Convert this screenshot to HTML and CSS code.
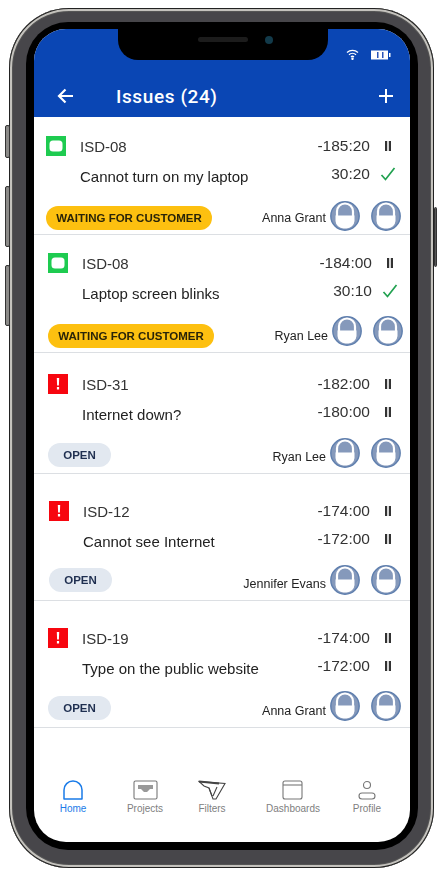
FILE: index.html
```html
<!DOCTYPE html>
<html lang="en">

<head>
    <meta charset="UTF-8">
    <meta name="viewport" content="width=device-width, initial-scale=1.0">
    <title>Issues</title>
    <link rel="stylesheet" href="styles.css">
</head>

<body>
    <svg class="sprites" width="0" height="0">
        <symbol id="avatar" viewBox="0 0 30 30">
            <circle cx="15" cy="15" r="14.2" fill="#8599bb" stroke="#5f7fae" stroke-width="1.400"/>
            <path d="M7 15v-4.500a8 8 0 0 1 16 0V15" fill="none" stroke="#fff" stroke-width="2.200"/>
            <path d="M5.500 14.500h19v5.500a8 8 0 0 1-8 7.500h-3a8 8 0 0 1-8-7.500z" fill="#fff"/>
        </symbol>
        <symbol id="pause" viewBox="0 0 8 12">
            <path d="M1 1h2.200v10H1zM4.800 1H7v10H4.800z" fill="#333"/>
        </symbol>
        <symbol id="check" viewBox="0 0 16 14">
            <path d="M1.500 8l4 4.500L14.500 1" fill="none" stroke="#21a150" stroke-width="1.700"/>
        </symbol>
        <symbol id="done" viewBox="0 0 20 20">
            <rect width="20" height="20" fill="#1ecb50"/>
            <rect x="3.500" y="4.500" width="13" height="11" rx="3.500" fill="#fff"/>
        </symbol>
        <symbol id="alert" viewBox="0 0 20 20">
            <rect width="20" height="20" fill="#f7060f"/>
            <path d="M8.800 4h2.400l-.3 7.500H9.100zM8.900 13h2.200v2.500H8.900z" fill="#fff"/>
        </symbol>
    </svg>

    <div class="phone">
        <span class="side-btn btn-mute"></span>
        <span class="side-btn btn-up"></span>
        <span class="side-btn btn-down"></span>
        <span class="side-btn btn-power"></span>

        <div class="screen">
            <div class="notch">
                <span class="speaker"></span>
                <span class="camera"></span>
            </div>

            <!-- Header -->
            <header class="app-header">
                <div class="status-icons">
                    <svg width="13" height="11" viewBox="0 0 13 11" fill="none" stroke="#fff" stroke-width="1.300">
                        <path d="M1 3.500a8 8 0 0 1 11 0M3 5.800a5 5 0 0 1 7 0M5 8a2.200 2.200 0 0 1 3 0"/>
                        <circle cx="6.500" cy="9.800" r=".6" fill="#fff"/>
                    </svg>
                    <svg width="20" height="10" viewBox="0 0 20 10">
                        <rect x="0" y="0.500" width="17" height="9" fill="#fff"/>
                        <path d="M6 2h1.500v6H6zM11 2h1.500v6H11z" fill="#2a55b8"/>
                        <rect x="18" y="3" width="1.500" height="4" fill="#fff"/>
                    </svg>
                </div>
                <div class="nav-row">
                    <svg class="nav-icon" width="16" height="16" viewBox="0 0 16 16" fill="none" stroke="#fff" stroke-width="2.200">
                        <path d="M16 8H2M8.500 1.500L2 8l6.500 6.500"/>
                    </svg>
                    <h1 class="nav-title">Issues (24)</h1>
                    <svg class="nav-icon" width="14" height="14" viewBox="0 0 14 14" fill="none" stroke="#fff" stroke-width="2">
                        <path d="M7 0v14M0 7h14"/>
                    </svg>
                </div>
            </header>

            <!-- Issue list -->
            <ul class="issues">
                <li class="issue issue-1">
                    <div class="issue-line">
                        <svg class="type-icon"><use href="#done"/></svg>
                        <span class="issue-id">ISD-08</span>
                        <span class="issue-time">-185:20</span>
                        <span class="issue-state"><svg class="pause"><use href="#pause"/></svg></span>
                    </div>
                    <div class="issue-line issue-second">
                        <span class="issue-title">Cannot turn on my laptop</span>
                        <span class="issue-time">30:20</span>
                        <span class="issue-state"><svg class="check"><use href="#check"/></svg></span>
                    </div>
                    <div class="issue-foot">
                        <span class="pill pill-waiting">WAITING FOR CUSTOMER</span>
                        <span class="assignee">Anna Grant</span>
                        <svg class="avatar"><use href="#avatar"/></svg>
                        <svg class="avatar"><use href="#avatar"/></svg>
                    </div>
                </li>
                <li class="issue issue-2">
                    <div class="issue-line">
                        <svg class="type-icon"><use href="#done"/></svg>
                        <span class="issue-id">ISD-08</span>
                        <span class="issue-time">-184:00</span>
                        <span class="issue-state"><svg class="pause"><use href="#pause"/></svg></span>
                    </div>
                    <div class="issue-line issue-second">
                        <span class="issue-title">Laptop screen blinks</span>
                        <span class="issue-time">30:10</span>
                        <span class="issue-state"><svg class="check"><use href="#check"/></svg></span>
                    </div>
                    <div class="issue-foot">
                        <span class="pill pill-waiting">WAITING FOR CUSTOMER</span>
                        <span class="assignee">Ryan Lee</span>
                        <svg class="avatar"><use href="#avatar"/></svg>
                        <svg class="avatar"><use href="#avatar"/></svg>
                    </div>
                </li>
                <li class="issue issue-3">
                    <div class="issue-line">
                        <svg class="type-icon"><use href="#alert"/></svg>
                        <span class="issue-id">ISD-31</span>
                        <span class="issue-time">-182:00</span>
                        <span class="issue-state"><svg class="pause"><use href="#pause"/></svg></span>
                    </div>
                    <div class="issue-line issue-second">
                        <span class="issue-title">Internet down?</span>
                        <span class="issue-time">-180:00</span>
                        <span class="issue-state"><svg class="pause"><use href="#pause"/></svg></span>
                    </div>
                    <div class="issue-foot">
                        <span class="pill pill-open">OPEN</span>
                        <span class="assignee">Ryan Lee</span>
                        <svg class="avatar"><use href="#avatar"/></svg>
                        <svg class="avatar"><use href="#avatar"/></svg>
                    </div>
                </li>
                <li class="issue issue-4">
                    <div class="issue-line">
                        <svg class="type-icon"><use href="#alert"/></svg>
                        <span class="issue-id">ISD-12</span>
                        <span class="issue-time">-174:00</span>
                        <span class="issue-state"><svg class="pause"><use href="#pause"/></svg></span>
                    </div>
                    <div class="issue-line issue-second">
                        <span class="issue-title">Cannot see Internet</span>
                        <span class="issue-time">-172:00</span>
                        <span class="issue-state"><svg class="pause"><use href="#pause"/></svg></span>
                    </div>
                    <div class="issue-foot">
                        <span class="pill pill-open">OPEN</span>
                        <span class="assignee">Jennifer Evans</span>
                        <svg class="avatar"><use href="#avatar"/></svg>
                        <svg class="avatar"><use href="#avatar"/></svg>
                    </div>
                </li>
                <li class="issue issue-5">
                    <div class="issue-line">
                        <svg class="type-icon"><use href="#alert"/></svg>
                        <span class="issue-id">ISD-19</span>
                        <span class="issue-time">-174:00</span>
                        <span class="issue-state"><svg class="pause"><use href="#pause"/></svg></span>
                    </div>
                    <div class="issue-line issue-second">
                        <span class="issue-title">Type on the public website</span>
                        <span class="issue-time">-172:00</span>
                        <span class="issue-state"><svg class="pause"><use href="#pause"/></svg></span>
                    </div>
                    <div class="issue-foot">
                        <span class="pill pill-open">OPEN</span>
                        <span class="assignee">Anna Grant</span>
                        <svg class="avatar"><use href="#avatar"/></svg>
                        <svg class="avatar"><use href="#avatar"/></svg>
                    </div>
                </li>
            </ul>

            <!-- Bottom tabs -->
            <nav class="tabs">
                <a href="#" class="tab tab-active">
                    <svg width="20" height="20" viewBox="0 0 20 20" fill="none" stroke="#1a7be8" stroke-width="1.500">
                        <path d="M1 19h18v-9a9 9 0 0 0-18 0z" stroke-linejoin="round"/>
                    </svg>
                    Home
                </a>
                <a href="#" class="tab">
                    <svg width="25" height="20" viewBox="0 0 25 20" fill="none" stroke="#777" stroke-width="1.100">
                        <rect x="1" y="1" width="23" height="18" rx="1.500"/>
                        <path d="M5 5h15v4h-3l-3 3h-3L8 9H5z" fill="#999" stroke="none"/>
                    </svg>
                    Projects
                </a>
                <a href="#" class="tab">
                    <svg width="28" height="20" viewBox="0 0 28 20" fill="none" stroke="#444" stroke-width="1.100">
                        <path d="M1 1.500l26 2-9 15.500h-3L11 8 6 6z"/>
                        <path d="M11 8l3 8M19 7l-4 9"/>
                        <path d="M1 1.500l20 2" stroke-width="2"/>
                    </svg>
                    Filters
                </a>
                <a href="#" class="tab">
                    <svg width="21" height="20" viewBox="0 0 21 20" fill="none" stroke="#777" stroke-width="1.100">
                        <rect x="1" y="1" width="19" height="18" rx="2"/>
                        <path d="M1 5h19"/>
                    </svg>
                    Dashboards
                </a>
                <a href="#" class="tab">
                    <svg width="18" height="20" viewBox="0 0 18 20" fill="none" stroke="#777" stroke-width="1.100">
                        <circle cx="9" cy="5" r="3.500"/>
                        <rect x="1" y="13" width="16" height="6" rx="3"/>
                    </svg>
                    Profile
                </a>
            </nav>
        </div>
    </div>
</body>

</html>
```

FILE: styles.css
```css
/* General styles */
body {
    font-family: "Liberation Sans", Arial, sans-serif;
    margin: 0;
    background-color: #fff;
}

.sprites {
    position: absolute;
}

/* Phone frame */
.phone {
    position: relative;
    box-sizing: border-box;
    width: 425px;
    height: 860px;
    margin: 8px 0 0 9px;
    padding: 21px 24px 26px 25px;
    border-radius: 60px;
    background: #47464a;
    box-shadow: inset 0 0 0 1px #222, inset 0 0 0 3px #c4c2bd, inset 0 0 0 4px #555;
}

.phone::before {
    content: "";
    position: absolute;
    left: 17px;
    right: 16px;
    top: 14px;
    bottom: 18px;
    border-radius: 42px;
    background: #000;
}

.side-btn {
    position: absolute;
    width: 3px;
    background: #8b8a88;
    border: 1px solid #333;
    border-radius: 2px;
}

.btn-mute {
    left: -4px;
    top: 117px;
    height: 31px;
}

.btn-up {
    left: -4px;
    top: 178px;
    height: 59px;
}

.btn-down {
    left: -4px;
    top: 257px;
    height: 59px;
}

.btn-power {
    right: -3px;
    top: 199px;
    width: 1px;
    height: 58px;
    background: #555;
}

.screen {
    position: relative;
    display: flex;
    flex-direction: column;
    height: 100%;
    border-radius: 32px;
    overflow: hidden;
    background: #fff;
    filter: blur(0.35px);
}

/* Notch */
.notch {
    position: absolute;
    left: 84px;
    top: 0;
    width: 210px;
    height: 31px;
    display: flex;
    justify-content: center;
    align-items: center;
    gap: 17px;
    padding: 0 0 10px 24px;
    box-sizing: border-box;
    background: #000;
    border-radius: 0 0 20px 20px;
}

.speaker {
    width: 50px;
    height: 5px;
    border-radius: 3px;
    background: #1c1c1c;
}

.camera {
    width: 8px;
    height: 8px;
    border-radius: 50%;
    background: #123a4a;
}

/* Header */
.app-header {
    flex: none;
    box-sizing: border-box;
    height: 88px;
    padding: 20px 17px 0 23px;
    background: #0a46b4;
    color: #fff;
}

.status-icons {
    display: flex;
    justify-content: flex-end;
    align-items: center;
    gap: 12px;
    height: 11px;
    padding-right: 2px;
}

.nav-row {
    display: flex;
    align-items: center;
    margin-top: 24px;
    height: 24px;
}

.nav-title {
    flex: 1;
    margin: 0 0 0 43px;
    font-family: Roboto, "Liberation Sans", sans-serif;
    font-size: 19px;
    font-weight: 500;
    letter-spacing: 0.6px;
}

/* Issue list */
.issues {
    flex: none;
    margin: 0;
    padding: 0;
    list-style: none;
}

.issue {
    border-bottom: 1px solid #dcdfe3;
    color: #222;
}

.issue-1 {
    padding: 19px 9px 3px 12px;
}

.issue-2 {
    padding: 18px 7px 6px 14px;
}

.issue-3 {
    padding: 21px 9px 5px 14px;
}

.issue-4 {
    padding: 27px 9px 5px 15px;
}

.issue-5 {
    padding: 27px 9px 6px 14px;
}

.issue-line {
    display: flex;
    align-items: center;
    height: 20px;
    font-size: 15px;
}

.issue-second {
    margin-top: 10px;
    padding-left: 34px;
}

.type-icon {
    width: 20px;
    height: 20px;
    margin-right: 14px;
}

.issue-id {
    flex: 1;
    color: #333;
}

.issue-title {
    flex: 1;
}

.issue-time {
    font-size: 15.5px;
    color: #333;
}

.issue-state {
    display: flex;
    justify-content: center;
    width: 26px;
    margin-left: 5px;
}

.issue-second .issue-time,
.issue-second .issue-state {
    position: relative;
    top: -2px;
}

.pause {
    width: 8px;
    height: 12px;
}

.check {
    width: 16px;
    height: 14px;
}

.issue-foot {
    display: flex;
    align-items: center;
    margin-top: 14px;
    height: 30px;
}

.issue-1 .issue-foot {
    margin-top: 15px;
}

.issue-2 .issue-foot,
.issue-5 .issue-foot {
    margin-top: 13px;
}

.pill {
    box-sizing: border-box;
    height: 24px;
    margin-top: 4px;
    border-radius: 12px;
    font-size: 11.5px;
    font-weight: bold;
    line-height: 24px;
    text-align: center;
}

.issue-2 .pill {
    margin-top: 9px;
}

.issue-4 .pill {
    margin-top: 0;
}

.pill-waiting {
    width: 166px;
    background: #fdc010;
    color: #2a2408;
}

.pill-open {
    width: 63px;
    background: #e2e8f0;
    color: #1f2f50;
}

.assignee {
    flex: 1;
    margin: 8px 4px 0 0;
    font-size: 12.5px;
    text-align: right;
    color: #222;
}

.issue-1 .assignee {
    margin-top: 4px;
}

.issue-2 .assignee,
.issue-5 .assignee {
    margin-top: 10px;
}

.avatar {
    width: 30px;
    height: 30px;
}

.avatar + .avatar {
    margin-left: 11px;
}

/* Bottom tabs */
.tabs {
    display: grid;
    grid-template-columns: 78px 66px 68px 94px 54px;
    justify-items: center;
    margin-top: auto;
    padding: 0 16px 28px 0;
}

.tab {
    display: flex;
    flex-direction: column;
    align-items: center;
    gap: 3px;
    font-size: 10px;
    color: #808080;
    text-decoration: none;
}

.tab-active {
    color: #1a7be8;
}
```
